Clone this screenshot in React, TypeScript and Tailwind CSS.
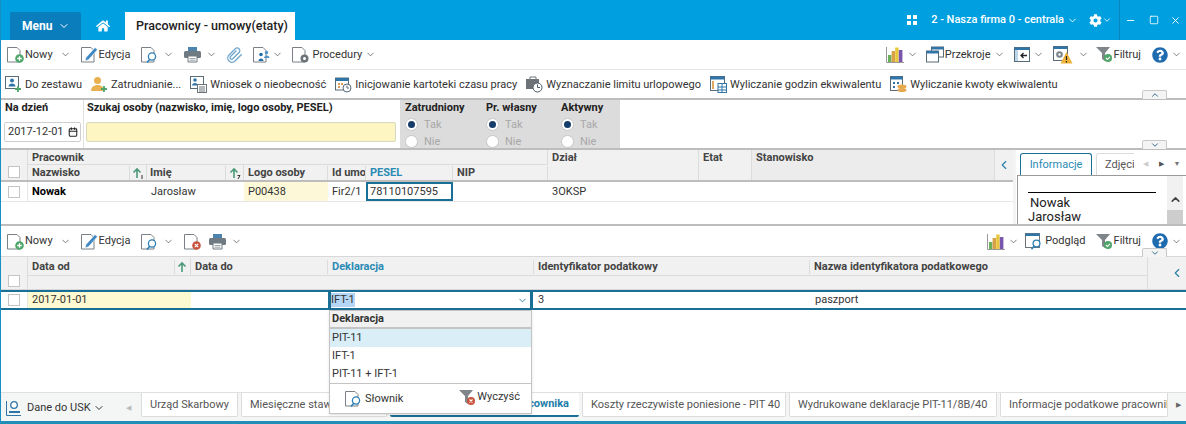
import React from 'react';
import { ChevronDown, ChevronUp, ChevronLeft, Minus, Square, X, Calendar } from 'lucide-react';
import { FaHome, FaCog, FaQuestionCircle } from 'react-icons/fa';

const Chev = ({ className = '' }: { className?: string }) => (
    <ChevronDown size={11} strokeWidth={1.6} className={`text-[#555] shrink-0 ${className}`} />
);

const DocBase = ({ children }: { children?: React.ReactNode }) => (
    <svg width="17" height="17" viewBox="0 0 17 17" className="shrink-0">
        <path d="M.5 1.500h9.500l3 3v11.500H.5z" fill="#fff" stroke="#7a8085" strokeWidth="1" />
        {children}
    </svg>
);

const NewIcon = () => (
    <DocBase>
        <circle cx="12.500" cy="12.500" r="4.300" fill="#4fa66a" />
        <path d="M10.200 12.500h4.600M12.500 10.200v4.600" stroke="#fff" strokeWidth="1.300" />
    </DocBase>
);
const EditIcon = () => (
    <DocBase>
        <path d="M4 15l1-3.500 9-10 2.500 2.200-9 10z" fill="#3f87c0" stroke="#fff" strokeWidth=".6" />
    </DocBase>
);
const SearchIcon = () => (
    <DocBase>
        <circle cx="11" cy="10.500" r="3.600" fill="#fff" stroke="#2d7fb5" strokeWidth="1.300" />
        <path d="M8.800 13.200l-2.800 3.300" stroke="#2d7fb5" strokeWidth="1.600" />
    </DocBase>
);
const DeleteIcon = () => (
    <DocBase>
        <circle cx="12.500" cy="12.500" r="4.300" fill="#c9533d" />
        <path d="M10.800 10.800l3.400 3.400M14.200 10.800l-3.400 3.400" stroke="#fff" strokeWidth="1.200" />
    </DocBase>
);
const PrintIcon = () => (
    <svg width="17" height="17" viewBox="0 0 17 17" className="shrink-0">
        <path d="M4 1h9v5H4z" fill="#4d84ad" />
        <rect x="0" y="5" width="17" height="7" rx="1.500" fill="#6f7a82" />
        <path d="M4 10h9v6H4z" fill="#fff" stroke="#6f7a82" />
        <path d="M5.500 12.500h6M5.500 14.200h6" stroke="#9aa3a9" />
    </svg>
);
const ClipIcon = () => (
    <svg width="18" height="18" viewBox="0 0 24 24" fill="none" stroke="#6ea5cc" strokeWidth="1.700" className="shrink-0">
        <path d="M21 11l-9 9a5.500 5.500 0 0 1-8-8l9-9a3.700 3.700 0 0 1 5 5l-9 9a1.800 1.800 0 0 1-3-3l8-8" />
    </svg>
);
const PeopleDocIcon = () => (
    <DocBase>
        <circle cx="8" cy="8.500" r="1.800" fill="#1f6ea8" />
        <path d="M5.500 15c0-3.500 5-3.500 5 0z" fill="#1f6ea8" />
        <circle cx="13.500" cy="6.500" r="1.700" fill="#4f96c9" />
        <path d="M11 12c0-3.500 5.500-3.500 5.500 0z" fill="#4f96c9" />
    </DocBase>
);
const GearDocIcon = () => (
    <DocBase>
        <circle cx="12.500" cy="12.500" r="4" fill="#6d7479" />
        <circle cx="12.500" cy="12.500" r="1.500" fill="#fff" />
    </DocBase>
);
const ChartIcon = () => (
    <svg width="18" height="17" viewBox="0 0 18 17" className="shrink-0">
        <path d="M.5 1v15.500H18" stroke="#999" fill="none" />
        <rect x="2" y="9" width="3.400" height="7" fill="#6aaf5a" />
        <rect x="5.600" y="5" width="3.400" height="11" fill="#d9a04a" />
        <rect x="9.200" y="1.500" width="3.400" height="14.500" fill="#e8c83a" />
        <rect x="12.800" y="4" width="3.600" height="12" fill="#7a55ad" />
    </svg>
);
const WindowsIcon = () => (
    <svg width="18" height="17" viewBox="0 0 18 17" fill="none" className="shrink-0">
        <rect x="5.500" y="1" width="12" height="10" fill="#fff" stroke="#5a6b78" />
        <path d="M5.500 1h12v2.500h-12z" fill="#2f75a8" />
        <rect x=".5" y="5" width="12" height="11" fill="#fff" stroke="#5a6b78" />
        <path d="M.5 5h12v2.500H.5z" fill="#2f75a8" />
    </svg>
);
const PreviewIcon = () => (
    <svg width="17" height="17" viewBox="0 0 17 17" fill="none" className="shrink-0">
        <rect x=".5" y=".5" width="14" height="14" fill="#fff" stroke="#6d7479" />
        <path d="M.5 .5h14v2.500H.5z" fill="#2f75a8" />
        <circle cx="11.500" cy="10.500" r="3.400" fill="#fff" stroke="#2d7fb5" strokeWidth="1.300" />
        <path d="M9.300 13l-2.800 3.300" stroke="#2d7fb5" strokeWidth="1.600" />
    </svg>
);
const PanelIcon = () => (
    <svg width="16" height="15" viewBox="0 0 16 15" className="shrink-0">
        <rect x=".5" y=".5" width="15" height="14" fill="#fff" stroke="#5a6b78" />
        <path d="M.5 .5h15v2.500H.5z" fill="#2f75a8" />
        <path d="M1 3h3v11H1z" fill="#bcd7ea" />
        <path d="M13 8.500H7M9.500 6l-2.500 2.500 2.500 2.500" stroke="#222" fill="none" strokeWidth="1.300" />
    </svg>
);
const GearWarnIcon = () => (
    <svg width="20" height="18" viewBox="0 0 20 18" className="shrink-0">
        <rect x=".5" y=".5" width="14" height="14" fill="#fff" stroke="#5a6b78" />
        <path d="M.5 .5h14v2.500H.5z" fill="#2f75a8" />
        <circle cx="6.500" cy="8.500" r="3.300" fill="#7b858c" />
        <circle cx="6.500" cy="8.500" r="1.200" fill="#fff" />
        <path d="M13.500 6l6 11.500h-12z" fill="#eeb23a" />
        <path d="M13.500 10v4M13.500 15v1.500" stroke="#222" strokeWidth="1.200" />
    </svg>
);
const FilterIcon = ({ clear = false }: { clear?: boolean }) => (
    <svg width="17" height="17" viewBox="0 0 17 17" className="shrink-0">
        <path d="M0 1h14L9 7v8L6 13V7z" fill="#7f8589" />
        <circle cx="12" cy="12" r="4" fill={clear ? '#c9533d' : '#4fa66a'} />
        {clear ? (
            <path d="M10.500 10.500l3 3M13.500 10.500l-3 3" stroke="#fff" strokeWidth="1.100" fill="none" />
        ) : (
            <path d="M10 12l1.500 1.500L14 10.800" stroke="#fff" strokeWidth="1.100" fill="none" />
        )}
    </svg>
);
const HelpIcon = () => <FaQuestionCircle size={16} className="text-[#1f6bb0] shrink-0" />;
const PersonIcon = ({ orange = false }: { orange?: boolean }) => (
    <svg width="17" height="17" viewBox="0 0 17 17" className="shrink-0">
        {orange ? (
            <>
                <circle cx="6.500" cy="4.500" r="3.500" fill="#e8b04e" />
                <path d="M0 15c0-8 13-8 13 0z" fill="#e8b04e" />
            </>
        ) : (
            <>
                <rect x=".5" y=".5" width="13" height="12" fill="#fff" stroke="#5a6b78" />
                <circle cx="7" cy="4.500" r="2" fill="#2f75a8" />
                <path d="M3.500 10.500c0-4 7-4 7 0z" fill="#2f75a8" />
            </>
        )}
        <path d="M13 10v6M10 13h6" stroke="#4fa66a" strokeWidth="1.800" />
    </svg>
);
const FormIcon = () => (
    <svg width="17" height="17" viewBox="0 0 17 17" className="shrink-0">
        <rect x=".5" y=".5" width="13" height="12" fill="#fff" stroke="#5a6b78" />
        <circle cx="5" cy="4" r="1.800" fill="#2f75a8" />
        <path d="M2 9.500c0-3.500 6-3.500 6 0z" fill="#2f75a8" />
        <rect x="7.500" y="8.500" width="9" height="8" fill="#fff" stroke="#6d7479" />
        <path d="M9 11h6M9 13h6M9 15h6" stroke="#6d7479" />
    </svg>
);
const CalClockIcon = () => (
    <svg width="17" height="17" viewBox="0 0 17 17" className="shrink-0">
        <rect x=".5" y="2" width="13" height="12" fill="#fff" stroke="#5a6b78" />
        <path d="M.5 2h13v3H.5z" fill="#2f75a8" />
        <path d="M3 7h2v2H3zM6 7h2v2H6zM3 10h2v2H3z" fill="#dd9a55" />
        <circle cx="12" cy="12" r="4" fill="#fff" stroke="#5a6b78" />
        <path d="M12 9.500V12h2" stroke="#5a6b78" fill="none" />
    </svg>
);
const BriefClockIcon = () => (
    <svg width="17" height="17" viewBox="0 0 17 17" className="shrink-0">
        <path d="M4 3V1h6v2" fill="none" stroke="#6d7479" />
        <rect x="0" y="3" width="13" height="10" fill="#6d7479" />
        <circle cx="11.500" cy="11.500" r="4.500" fill="#fff" stroke="#4a5a66" />
        <path d="M11.500 8.500v3h2.500" stroke="#4a5a66" fill="none" />
    </svg>
);
const CalcFormIcon = () => (
    <svg width="17" height="17" viewBox="0 0 17 17" className="shrink-0">
        <rect x=".5" y=".5" width="14" height="14" fill="#fff" stroke="#5a6b78" />
        <path d="M.5 .5h14v3H.5z" fill="#2f75a8" />
        <path d="M2 5h2v8H2z" fill="#e3a764" />
        <rect x="8" y="7.500" width="8.500" height="9" fill="#fff" stroke="#2f75a8" />
        <path d="M8 11h8.500M8 14h8.500M12 7.500v9" stroke="#2f75a8" />
    </svg>
);
const CalcCoinsIcon = () => (
    <svg width="17" height="17" viewBox="0 0 17 17" className="shrink-0">
        <rect x=".5" y=".5" width="12" height="14" fill="#fff" stroke="#5a6b78" />
        <path d="M.5 .5h12v3H.5z" fill="#2f75a8" />
        <path d="M3 6h2v2H3zM7 6h2v2H7zM3 10h2v2H3z" fill="#2f75a8" />
        <ellipse cx="12" cy="10.500" rx="4.500" ry="2" fill="#e6a94e" />
        <ellipse cx="12" cy="14" rx="4.500" ry="2" fill="#e6a94e" />
    </svg>
);
const UskIcon = () => (
    <svg width="15" height="16" viewBox="0 0 15 16" className="shrink-0">
        <path d="M.5 1v14.500H15" stroke="#2f75a8" fill="none" />
        <circle cx="8" cy="5" r="3.300" fill="#fff" stroke="#2f75a8" strokeWidth="1.300" />
        <path d="M3 12h11" stroke="#2f75a8" strokeWidth="2" />
    </svg>
);
const SortArrow = ({ num }: { num?: string }) => (
    <svg width="14" height="14" viewBox="0 0 14 14" className="shrink-0">
        <path d="M6 12V3M2.500 6.500L6 3l3.500 3.500" stroke="#4c9a78" strokeWidth="1.600" fill="none" />
        {num && <path d={num === '1' ? 'M11 9v4' : 'M9.500 9.500h2.500l-2 3.500'} stroke="#333" strokeWidth="1" fill="none" />}
    </svg>
);

const Check = () => <div className="w-3 h-3 border border-[#c4c4c4] bg-white shrink-0" />;

const Radio = ({ on = false, label }: { on?: boolean; label: string }) => (
    <div className="flex items-center h-[17px] gap-[6px] text-[#a8a8a8]">
        <div className="w-[13px] h-[13px] rounded-full bg-white border border-[#c8c8c8] flex items-center justify-center">
            {on && <div className="w-[7px] h-[7px] rounded-full bg-[#153c6b]" />}
        </div>
        {label}
    </div>
);

const RadioGroup = ({ title, w }: { title: string; w: string }) => (
    <div className={`${w} pl-[5px]`}>
        <div className="font-bold text-[#222] h-[15px] mb-[1px] flex items-center">{title}</div>
        <Radio on label="Tak" />
        <Radio label="Nie" />
    </div>
);

const HeadCell = ({ className = '', children }: { className?: string; children?: React.ReactNode }) => (
    <div className={`px-1 font-bold text-[#444] overflow-hidden whitespace-nowrap border-r border-[#dcdcdc] shrink-0 ${className}`}>{children}</div>
);

const BottomTab = ({ w, children, active = false }: { w: string; children: React.ReactNode; active?: boolean }) => (
    <div className={`${w} h-[24px] flex items-center shrink-0 overflow-hidden whitespace-nowrap rounded-b-[2px] ${active ? 'bg-white border-b-2 border-[#1a6f96] text-[#1f7ea8] font-bold justify-end pr-[10px]' : 'bg-white border border-t-0 border-[#dcdcdc] text-[#555] pl-[8px]'}`}>
        {children}
    </div>
);

const FoldTab = ({ up = false, className }: { up?: boolean; className: string }) => (
    <div className={`absolute left-[1141px] w-[25px] h-[9px] bg-[#f4f4f4] border border-b-0 border-[#c8c8c8] rounded-t-[2px] flex items-center justify-center ${className}`}>
        {up ? <ChevronUp size={10} strokeWidth={2} className="text-[#14507a]" /> : <ChevronDown size={10} strokeWidth={2} className="text-[#14507a]" />}
    </div>
);

export default function App() {
    return (
        <div className="w-[1186px] h-[424px] overflow-hidden bg-white text-[11px] leading-[14px] text-[#333] relative border-l border-[#1a8fc4]" style={{ fontFamily: 'Roboto, sans-serif' }}>
            {/* title bar */}
            <div className="h-10 bg-[#009fdf] flex items-end pl-[9px] text-white">
                <div className="w-[71px] h-7 bg-[#0a7dbd] rounded-t-[2px] flex items-center pl-3 gap-[6px] font-bold text-[12px]">
                    Menu <ChevronDown size={12} strokeWidth={2} />
                </div>
                <div className="w-11 h-7 flex items-center justify-center">
                    <FaHome size={14} />
                </div>
                <div className="w-[170px] h-7 bg-white text-[#222] font-medium flex items-center pl-[11px] text-[12.500px]">
                    Pracownicy - umowy(etaty)
                </div>
                <div className="ml-auto flex items-center h-full self-start">
                    <div className="grid grid-cols-2 gap-[2px]">
                        <div className="w-[4px] h-[4px] bg-white" />
                        <div className="w-[4px] h-[4px] bg-white" />
                        <div className="w-[4px] h-[4px] bg-white" />
                        <div className="w-[4px] h-[4px] bg-white" />
                    </div>
                    <span className="ml-[14px] font-medium text-[11px] whitespace-nowrap">2 - Nasza firma 0 - centrala</span>
                    <ChevronDown size={11} className="ml-[3px]" />
                    <FaCog size={13} className="ml-[11px]" />
                    <ChevronDown size={10} />
                    <div className="w-px h-10 bg-[#0a86bd] ml-[7px]" />
                    <Minus size={11} className="ml-[5px]" />
                    <Square size={10} className="ml-[13px]" />
                    <X size={11} className="ml-[11px] mr-[5px]" />
                </div>
            </div>

            {/* main toolbar */}
            <div className="h-[30px] flex items-center pl-[6px] pr-[4px] border-b border-[#e4e4e4]">
                <NewIcon /><span className="ml-[1px]">Nowy</span><Chev className="ml-[7px]" />
                <div className="ml-[10px]"><EditIcon /></div><span className="ml-[1px]">Edycja</span>
                <div className="ml-[11px]"><SearchIcon /></div><Chev className="ml-[5px]" />
                <div className="ml-[10px]"><PrintIcon /></div><Chev className="ml-[5px]" />
                <div className="ml-[9px]"><ClipIcon /></div>
                <div className="ml-[9px]"><PeopleDocIcon /></div><Chev className="ml-[2px]" />
                <div className="ml-[9px]"><GearDocIcon /></div><span className="ml-[3px]">Procedury</span><Chev className="ml-[3px]" />
                <div className="ml-auto flex items-center">
                    <ChartIcon /><Chev className="ml-[3px]" />
                    <div className="ml-[8px]"><WindowsIcon /></div><span className="ml-[1px]">Przekroje</span><Chev className="ml-[3px]" />
                    <div className="ml-[9px]"><PanelIcon /></div><Chev className="ml-[3px]" />
                    <div className="ml-[9px]"><GearWarnIcon /></div><Chev className="ml-[5px]" />
                    <div className="ml-[7px]"><FilterIcon /></div><span className="ml-[1px]">Filtruj</span>
                    <div className="ml-[11px]"><HelpIcon /></div><Chev className="ml-[3px]" />
                </div>
            </div>

            {/* actions toolbar */}
            <div className="h-[30px] flex items-center pl-[4px] pt-[1px] gap-[9px] border-b-2 border-[#bdbdbd] whitespace-nowrap">
                <div className="flex items-center gap-[3px]"><PersonIcon />Do zestawu</div>
                <div className="flex items-center gap-[3px]"><PersonIcon orange />Zatrudnianie...</div>
                <div className="flex items-center gap-[3px]"><FormIcon />Wniosek o nieobecność</div>
                <div className="flex items-center gap-[3px]"><CalClockIcon />Inicjowanie kartoteki czasu pracy</div>
                <div className="flex items-center gap-[3px]"><BriefClockIcon />Wyznaczanie limitu urlopowego</div>
                <div className="flex items-center gap-[3px]"><CalcFormIcon />Wyliczanie godzin ekwiwalentu</div>
                <div className="flex items-center gap-[3px]"><CalcCoinsIcon />Wyliczanie kwoty ekwiwalentu</div>
            </div>

            {/* filters */}
            <div className="h-[50px] flex border-b-2 border-[#bdbdbd]">
                <div className="w-[83px] border-r border-[#e0e0e0] pl-[3px] shrink-0">
                    <div className="font-bold text-[#222] h-[14px] mt-[1px] pl-[1px] flex items-center">Na dzień</div>
                    <div className="mt-[7px] w-[77px] h-[20px] border border-[#cfcfcf] rounded-[2px] flex items-center pl-[3px] gap-[4px] whitespace-nowrap">
                        2017-12-01 <Calendar size={10} strokeWidth={2.500} className="text-[#222] shrink-0" />
                    </div>
                </div>
                <div className="w-[316px] pl-[2px] shrink-0">
                    <div className="font-bold text-[#222] h-[14px] mt-[1px] pl-[1px] flex items-center">Szukaj osoby (nazwisko, imię, logo osoby, PESEL)</div>
                    <div className="mt-[7px] w-[310px] h-[20px] border border-[#d8d8c0] rounded-[2px] bg-[#fdf6c3]" />
                </div>
                <div className="w-[220px] bg-[#dcdcdc] flex shrink-0 overflow-hidden">
                    <RadioGroup title="Zatrudniony" w="w-[81px]" />
                    <RadioGroup title="Pr. własny" w="w-[75px]" />
                    <RadioGroup title="Aktywny" w="w-[64px]" />
                </div>
            </div>

            {/* employees grid + side panel */}
            <div className="h-[76px] flex border-b-2 border-[#bdbdbd] overflow-hidden">
                <div className="w-[1012px] shrink-0">
                    <div className="h-[32px] flex bg-[#f1f1f1] border-b-2 border-[#bdbdbd]">
                        <div className="w-[27px] border-r border-[#dcdcdc] flex items-end justify-center pb-[2px] shrink-0"><Check /></div>
                        <div className="w-[520px] shrink-0">
                            <div className="h-[15px] flex items-center pl-[4px] pt-[1px] font-bold text-[#444] border-b border-[#dcdcdc] border-r">Pracownik</div>
                            <div className="h-[15px] flex items-center">
                                <HeadCell className="w-[102px]">Nazwisko</HeadCell>
                                <div className="w-[17px] h-full flex items-center justify-center border-r border-[#dcdcdc] shrink-0"><SortArrow num="1" /></div>
                                <HeadCell className="w-[79px] pl-[3px]">Imię</HeadCell>
                                <div className="w-[18px] h-full flex items-center justify-center border-r border-[#dcdcdc] shrink-0"><SortArrow num="2" /></div>
                                <HeadCell className="w-[84px]">Logo osoby</HeadCell>
                                <HeadCell className="w-[38px]">Id umowy</HeadCell>
                                <HeadCell className="w-[87px] !text-[#2b8bb5]">PESEL</HeadCell>
                                <HeadCell className="w-[95px]">NIP</HeadCell>
                            </div>
                        </div>
                        <HeadCell className="w-[151px] pt-[1px]">Dział</HeadCell>
                        <HeadCell className="w-[53px] pt-[1px]">Etat</HeadCell>
                        <HeadCell className="w-[243px] pt-[1px] bg-[#ececec]">Stanowisko</HeadCell>
                        <div className="flex-1 flex items-center justify-center"><ChevronLeft size={14} className="text-[#2b7fa8]" /></div>
                    </div>
                    <div className="h-[20px] flex items-center border-b border-[#e6e6e6]">
                        <div className="w-[27px] border-r border-[#e6e6e6] h-full flex items-center justify-center shrink-0"><Check /></div>
                        <div className="w-[119px] pl-[4px] font-bold text-black shrink-0">Nowak</div>
                        <div className="w-[97px] pl-[4px] shrink-0">Jarosław</div>
                        <div className="w-[84px] h-full bg-[#fdf9d8] pl-[4px] flex items-center shrink-0">P00438</div>
                        <div className="w-[38px] pl-[4px] shrink-0 overflow-hidden">Fir2/1</div>
                        <div className="w-[87px] h-full border-[2px] border-[#1a6f96] flex items-center pl-[2px] shrink-0">78110107595</div>
                        <div className="w-[95px] shrink-0" />
                        <div className="pl-[4px]">3OKSP</div>
                    </div>
                </div>
                <div className="w-[3px] shrink-0 bg-[#f4f4f4]" />
                <div className="flex-1 min-w-0 pt-[3px]">
                    <div className="h-[22px] flex items-end pl-[4px] text-[#555]">
                        <div className="w-[72px] h-full border border-b-0 border-[#1a6f96] rounded-t-[3px] flex items-center justify-center text-[#2b8bb5]">Informacje</div>
                        <div className="w-[38px] h-full ml-[4px] border border-b-0 border-r-0 border-[#dcdcdc] rounded-tl-[3px] flex items-center pl-[8px] overflow-hidden">Zdjęci</div>
                        <span className="ml-[3px] w-[16px] text-center self-center text-[7px] text-[#ccc]">◀</span>
                        <span className="w-[16px] text-center self-center text-[7px]">▶</span>
                        <span className="w-[16px] text-center self-center text-[7px] text-[#777]">▼</span>
                    </div>
                    <div className="h-[50px] ml-[1px] border border-[#9a9a9a] border-r-0 flex overflow-hidden">
                        <div className="flex-1 pl-[10px] pt-[16px] text-[13px] leading-[14px] text-[#222]">
                            <div className="w-[128px] h-px bg-black mb-[3px]" />
                            <div className="pl-[2px]">Nowak</div>
                            <div>Jarosław</div>
                        </div>
                        <div className="w-[16px] bg-[#f1f1f1] flex flex-col items-center pt-[17px] mr-[3px]">
                            <ChevronUp size={13} strokeWidth={3} className="text-[#444]" />
                            <div className="w-full h-[14px] mt-[4px] bg-[#cdcdcd] shrink-0" />
                        </div>
                    </div>
                </div>
            </div>

            {/* lower toolbar */}
            <div className="h-[30px] flex items-center pl-[6px] pr-[4px]">
                <NewIcon /><span className="ml-[1px]">Nowy</span><Chev className="ml-[7px]" />
                <div className="ml-[10px]"><EditIcon /></div><span className="ml-[1px]">Edycja</span>
                <div className="ml-[11px]"><SearchIcon /></div><Chev className="ml-[5px]" />
                <div className="ml-[10px]"><DeleteIcon /></div>
                <div className="ml-[8px]"><PrintIcon /></div><Chev className="ml-[5px]" />
                <div className="ml-auto flex items-center">
                    <ChartIcon /><Chev className="ml-[3px]" />
                    <div className="ml-[6px]"><PreviewIcon /></div><span className="ml-[3px]">Podgląd</span>
                    <div className="ml-[10px]"><FilterIcon /></div><span className="ml-[1px]">Filtruj</span>
                    <div className="ml-[11px]"><HelpIcon /></div><Chev className="ml-[3px]" />
                </div>
            </div>

            {/* lower grid header */}
            <div className="h-[34px] flex bg-[#f1f1f1] border-y border-[#d8d8d8]">
                <div className="w-[27px] border-r border-[#dcdcdc] flex items-end justify-center pb-[2px] shrink-0"><Check /></div>
                <div className="w-[1120px] shrink-0 border-r border-[#dcdcdc]">
                    <div className="h-[19px] flex items-center pt-[1px] border-b border-[#dcdcdc]">
                        <HeadCell className="w-[147px]">Data od</HeadCell>
                        <div className="w-[16px] h-full border-r border-[#dcdcdc] flex items-center justify-center shrink-0"><SortArrow /></div>
                        <HeadCell className="w-[137px]">Data do</HeadCell>
                        <HeadCell className="w-[206px] !text-[#2b8bb5]">Deklaracja</HeadCell>
                        <HeadCell className="w-[276px]">Identyfikator podatkowy</HeadCell>
                        <HeadCell className="w-[338px]">Nazwa identyfikatora podatkowego</HeadCell>
                    </div>
                </div>
                <div className="flex-1 flex items-center justify-end pr-[2px]"><ChevronLeft size={14} className="text-[#2b7fa8]" /></div>
            </div>

            {/* selected row */}
            <div className="h-[20px] flex items-center border-y-2 border-[#1a6f96]">
                <div className="w-[27px] h-full flex items-center justify-center border-r border-[#e6e6e6] shrink-0"><Check /></div>
                <div className="w-[163px] h-full bg-[#fdf9d0] pl-[4px] flex items-center shrink-0">2017-01-01</div>
                <div className="w-[137px] shrink-0" />
                <div className="w-[205px] h-full border-x-[3px] border-[#1a6f96] flex items-center pr-[2px] shrink-0">
                    <span className="bg-[#b5d7f5]">IFT-1</span>
                    <ChevronDown size={11} className="ml-auto text-[#2b7fa8]" />
                </div>
                <div className="w-[277px] pl-[5px] shrink-0">3</div>
                <div className="pl-[5px]">paszport</div>
            </div>

            <div className="h-[82px]" />

            {/* bottom tabs */}
            <div className="h-[29px] flex items-start border-t border-[#e0e0e0] bg-[#f4f6f6]">
                <div className="w-[140px] h-full flex items-center pl-[5px] pt-[2px] shrink-0">
                    <UskIcon />
                    <span className="ml-[6px] whitespace-nowrap">Dane do USK</span>
                    <ChevronDown size={12} className="ml-[2px] shrink-0" strokeWidth={2} />
                    <span className="ml-[21px] text-[7px] text-[#bbb]">◀</span>
                </div>
                <div className="flex gap-[3px] flex-1 min-w-0">
                    <BottomTab w="w-[97px]">Urząd Skarbowy</BottomTab>
                    <BottomTab w="w-[146px]">Miesięczne stawki</BottomTab>
                    <BottomTab w="w-[189px]" active>Informacje podatkowe pracownika</BottomTab>
                    <BottomTab w="w-[204px]">Koszty rzeczywiste poniesione - PIT 40</BottomTab>
                    <BottomTab w="w-[208px]">Wydrukowane deklaracje PIT-11/8B/40</BottomTab>
                    <BottomTab w="w-[168px]">Informacje podatkowe pracownika</BottomTab>
                    <span className="self-center text-[7px] text-[#666] ml-[5px]">▶</span>
                </div>
            </div>
            <div className="h-[3px] bg-[#1f8fb8]" />

            {/* floating bits */}
            <FoldTab up className="top-[90px]" />
            <FoldTab className="top-[140px]" />
            <FoldTab className="top-[248px]" />

            {/* dropdown */}
            <div className="absolute left-[328px] top-[310px] w-[203px] h-[104px] bg-white border border-[#c4c4c4] shadow-sm">
                <div className="h-[18px] bg-[#f1f1f1] border-b-2 border-[#c4c4c4] font-bold flex items-center pl-[2px]">Deklaracja</div>
                <div className="h-[18px] bg-[#d9eef7] flex items-center pl-[2px]">PIT-11</div>
                <div className="h-[18px] flex items-center pl-[2px]">IFT-1</div>
                <div className="h-[18px] flex items-center pl-[2px]">PIT-11 + IFT-1</div>
                <div className="h-[30px] border-t border-[#c4c4c4] flex items-center pl-[15px]">
                    <SearchIcon /><span className="ml-[3px]">Słownik</span>
                    <div className="ml-auto flex items-center pr-[11px] -mt-[3px]">
                        <FilterIcon clear /><span className="ml-[1px]">Wyczyść</span>
                    </div>
                </div>
            </div>
        </div>
    );
}
